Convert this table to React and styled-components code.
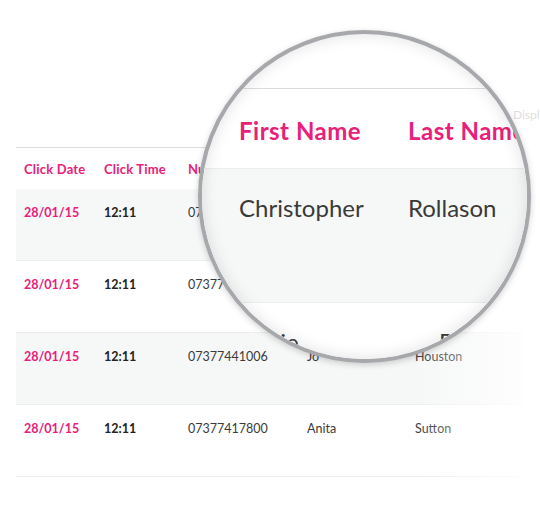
import React from 'react';
import styled, { createGlobalStyle } from 'styled-components';

const PINK = '#e8207a';
const COLS = '80px 84px 119px 108px 1fr';

const GlobalStyle = createGlobalStyle`
  html, body {
    margin: 0;
    padding: 0;
    background: #fff;
  }
  body {
    overflow: hidden;
    font-family: Lato, "Open Sans", "Liberation Sans", sans-serif;
    color: #333;
  }
`;

const Stage = styled.div`
  position: relative;
  width: 540px;
  height: 505px;
  overflow: hidden;
`;

const Page = styled.div`
  padding: 0 17px 0 16px;
`;

const Toolbar = styled.div`
  height: 147px;
  box-sizing: border-box;
  display: flex;
  justify-content: flex-end;
  align-items: flex-end;
  padding-bottom: 25px;
`;

const PageInfo = styled.span`
  width: 10px;
  white-space: nowrap;
  font-size: 12px;
  line-height: 14px;
  color: #dedede;
`;

const Table = styled.div`
  position: relative;
  border-top: 1px solid #dddddd;
`;

const HeadRow = styled.div`
  display: grid;
  grid-template-columns: ${COLS};
  align-items: center;
  height: 41px;
  padding-left: 8px;
`;

const HeadCell = styled.div`
  font-size: 13px;
  font-weight: 700;
  letter-spacing: 0.2px;
  color: ${PINK};
  white-space: nowrap;
`;

const Row = styled.div`
  display: grid;
  grid-template-columns: ${COLS};
  align-items: start;
  height: 72px;
  box-sizing: border-box;
  padding: 16px 0 0 8px;
  background: ${p => (p.$shaded ? '#f6f7f7' : '#fff')};
  border-bottom: 1px solid #eeeeee;
`;

const Cell = styled.div`
  font-size: 12.5px;
  line-height: 16px;
  white-space: nowrap;
  color: ${p => (p.$tone === 'date' ? PINK : p.$tone === 'time' ? '#222' : '#3a3a3a')};
  font-weight: ${p => (p.$tone === 'plain' ? 400 : 700)};
`;

const Fade = styled.div`
  position: absolute;
  top: 0;
  right: 0;
  bottom: 0;
  width: 110px;
  background: linear-gradient(to right, rgba(255, 255, 255, 0), rgba(255, 255, 255, 0.85));
  pointer-events: none;
`;

const Lens = styled.div`
  position: absolute;
  left: 198px;
  top: 30px;
  width: 333px;
  height: 333px;
  box-sizing: border-box;
  border: 4px solid #a7a8ab;
  border-radius: 50%;
  overflow: hidden;
  background: #fff;
  box-shadow: 0 2px 6px rgba(0, 0, 0, 0.18);

  &::after {
    content: '';
    position: absolute;
    inset: 0;
    border-radius: 50%;
    box-shadow: inset 0 0 16px rgba(0, 0, 0, 0.12);
    pointer-events: none;
  }
`;

const LensTable = styled.div`
  padding-top: 54px;
`;

const LensHead = styled.div`
  display: grid;
  grid-template-columns: 169px 1fr;
  align-items: center;
  height: 80px;
  box-sizing: border-box;
  padding: 3px 0 0 37px;
  border-top: 1px solid #dcdcdc;
`;

const LensHeadCell = styled.div`
  font-size: 24px;
  font-weight: 700;
  letter-spacing: 0.5px;
  color: ${PINK};
  white-space: nowrap;
`;

const LensRow = styled.div`
  display: grid;
  grid-template-columns: 169px 1fr;
  align-items: start;
  height: 134px;
  box-sizing: border-box;
  padding: 25px 0 0 37px;
  border-top: 1px solid #ececec;
  background: ${p => (p.$shaded ? '#f6f7f7' : '#fff')};
`;

const LensCell = styled.div`
  font-size: 24px;
  line-height: 28px;
  color: #3a3a3a;
  white-space: nowrap;
  padding-left: ${p => p.$shift || 0}px;
`;

const rows = [
  { date: '28/01/15', time: '12:11', number: '07377452190', first: 'Christopher', last: 'Rollason' },
  { date: '28/01/15', time: '12:11', number: '07377418823', first: 'Jamie', last: 'Robson' },
  { date: '28/01/15', time: '12:11', number: '07377441006', first: 'Jo', last: 'Houston' },
  { date: '28/01/15', time: '12:11', number: '07377417800', first: 'Anita', last: 'Sutton' },
];

const App = () => {
  return (
    <Stage>
      <GlobalStyle />
      <Page>
        <Toolbar>
          <PageInfo>Displaying 1–4 of 120</PageInfo>
        </Toolbar>
        <Table>
          <HeadRow>
            <HeadCell>Click Date</HeadCell>
            <HeadCell>Click Time</HeadCell>
            <HeadCell>Number</HeadCell>
            <HeadCell>First Name</HeadCell>
            <HeadCell>Last Name</HeadCell>
          </HeadRow>
          {rows.map((row, index) => (
            <Row key={index} $shaded={index % 2 === 0}>
              <Cell $tone="date">{row.date}</Cell>
              <Cell $tone="time">{row.time}</Cell>
              <Cell $tone="plain">{row.number}</Cell>
              <Cell $tone="plain">{row.first}</Cell>
              <Cell $tone="plain">{row.last}</Cell>
            </Row>
          ))}
          <Fade />
        </Table>
      </Page>

      <Lens>
        <LensTable>
          <LensHead>
            <LensHeadCell>First Name</LensHeadCell>
            <LensHeadCell>Last Name</LensHeadCell>
          </LensHead>
          <LensRow $shaded>
            <LensCell>Christopher</LensCell>
            <LensCell>Rollason</LensCell>
          </LensRow>
          <LensRow>
            <LensCell>Jamie</LensCell>
            <LensCell $shift={31}>Robson</LensCell>
          </LensRow>
        </LensTable>
      </Lens>
    </Stage>
  );
};

export default App;
